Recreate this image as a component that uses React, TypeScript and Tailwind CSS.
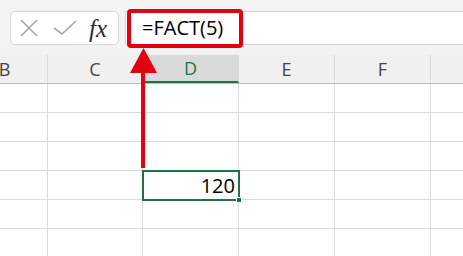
import React from 'react';

const cols = [
  { label: 'B', w: 'w-[48px]' },
  { label: 'C', w: 'w-[95px]' },
  { label: 'D', w: 'w-[96px]' },
  { label: 'E', w: 'w-[96px]' },
  { label: 'F', w: 'w-[96px]' },
  { label: '', w: 'w-[96px]' },
];

const rows = [0, 1, 2, 3, 4, 5];

const Toolbar = () => (
  <div className="flex h-[55px] items-start bg-[#f3f3f3] pt-[11px] pl-[10px]">
    <div className="flex h-[34px] w-[109px] items-center rounded-[5px] border border-[#d9d9d9] bg-white">
      <svg width="18" height="18" viewBox="0 0 18 18" className="ml-[9px]">
        <path d="M1 1 L17 17 M17 1 L1 17" stroke="#a6a6a6" strokeWidth="1.6" fill="none" />
      </svg>
      <svg width="24" height="16" viewBox="0 0 24 16" className="ml-[15px]">
        <path d="M1 8 L9 14 L23 1" stroke="#a6a6a6" strokeWidth="1.6" fill="none" />
      </svg>
      <span className="ml-[12px] font-['Liberation_Serif',serif] text-[25px] italic leading-none text-[#2b2b2b]">fx</span>
    </div>
    <div className="ml-[6px] flex h-[34px] flex-1 items-center border-y border-l border-[#d4d4d4] bg-white pl-[16px]">
      <span className="font-['Open_Sans',sans-serif] text-[20px] leading-none text-black">=FACT(5)</span>
    </div>
  </div>
);

const Header = () => (
  <div className="flex h-[29px] border-b border-[#bdbdbd] bg-[#f0f0f0]">
    {cols.map((c, i) =>
      c.label === 'D' ? (
        <div
          key={i}
          className={`${c.w} flex shrink-0 items-center justify-center border-b-2 border-r border-b-[#217346] border-r-[#dadada] bg-[#d9d9d9] text-[18px] text-[#217346]`}
        >
          {c.label}
        </div>
      ) : (
        <div
          key={i}
          className={`${c.w} flex shrink-0 items-center justify-center border-r border-[#dadada] text-[18px] text-[#444]`}
        >
          <span className={i === 0 ? 'mr-[38px]' : ''}>{c.label}</span>
        </div>
      )
    )}
  </div>
);

const Grid = () => (
  <div className="flex flex-col">
    {rows.map((r) => (
      <div key={r} className="flex h-[29px] shrink-0">
        {cols.map((c, i) => (
          <div key={i} className={`${c.w} relative shrink-0 border-r border-b border-[#dadada]`}>
            {r === 3 && c.label === 'D' && (
              <div className="absolute -left-[1px] -top-[1px] z-10 flex h-[31px] w-[98px] items-center justify-end border-2 border-[#217346] bg-white pr-[3px] text-[20px] text-black">
                120
                <div className="absolute -bottom-[4px] -right-[4px] h-[6px] w-[6px] border border-white bg-[#217346]" />
              </div>
            )}
          </div>
        ))}
      </div>
    ))}
  </div>
);

export default function App() {
  return (
    <div className="relative h-[256px] w-[463px] overflow-hidden bg-white font-['Open_Sans',sans-serif]">
      <Toolbar />
      <Header />
      <Grid />
      {/* highlight box and arrow overlay */}
      <div className="absolute left-[127px] top-[9px] h-[39px] w-[116px] rounded-[4px] border-4 border-[#e3000f]" />
      <svg className="absolute left-0 top-0" width="463" height="256" viewBox="0 0 463 256">
        <polygon points="143.5,48 130,73 157,73" fill="#e3000f" />
        <rect x="141" y="72" width="4" height="96" fill="#e3000f" />
      </svg>
    </div>
  );
}
